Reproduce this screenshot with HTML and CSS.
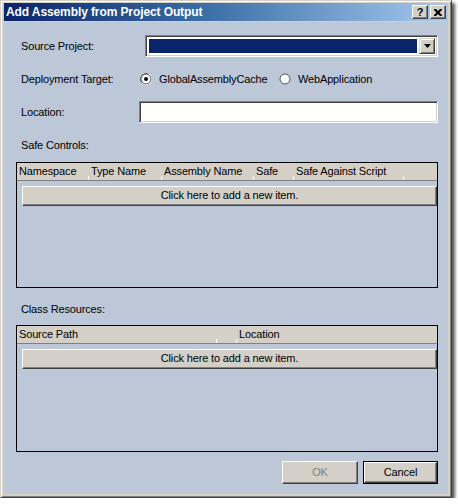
FILE: index.html
```html
<!DOCTYPE html>
<html>
<head>
<meta charset="utf-8">
<link rel="stylesheet" href="styles.css">
</head>
<body>
<div class="window">
  <div class="titlebar">
    <span class="title">Add Assembly from Project Output</span>
    <div class="tbtns">
      <span class="tbtn help">?</span>
      <span class="tbtn close"><svg width="8" height="7" viewBox="0 0 8 7"><path d="M0 0h2l2 2 2-2h2v1L5.5 3.5 8 6v1H6L4 5 2 7H0V6l2.5-2.5L0 1z" fill="#000"/></svg></span>
    </div>
  </div>
  <div class="client">
    <div class="row row1">
      <span class="label">Source Project:</span>
      <div class="combo">
        <div class="sel"></div>
        <div class="drop"><svg width="7" height="4" viewBox="0 0 7 4"><path d="M0 0h7L3.5 4z" fill="#000"/></svg></div>
      </div>
    </div>
    <div class="row row2">
      <span class="label">Deployment Target:</span>
      <div class="opts">
        <label class="opt first">
          <svg class="radio" width="12" height="12" viewBox="0 0 12 12">
            <path d="M4 0.5h4M2 1.5h2M8 1.5h2M1.5 2v2M0.5 4v4M1.5 8v2" stroke="#808080" fill="none"/>
            <path d="M8 1.5h2M10.5 2v2M11.5 4v4M10.5 8v2M8 10.5h2M2 10.5h2M4 11.5h4" stroke="#fff" fill="none"/>
            <circle cx="6" cy="6" r="4.5" fill="#fff"/>
            <circle cx="6" cy="6" r="5" fill="none" stroke="#404040" stroke-width="0.8" stroke-dasharray="0"/>
            <circle cx="6" cy="6" r="2" fill="#000"/>
          </svg>
          <span>GlobalAssemblyCache</span>
        </label>
        <label class="opt">
          <svg class="radio" width="12" height="12" viewBox="0 0 12 12">
            <circle cx="6" cy="6" r="4.5" fill="#fff"/>
            <circle cx="6" cy="6" r="5" fill="none" stroke="#404040" stroke-width="0.8"/>
          </svg>
          <span>WebApplication</span>
        </label>
      </div>
    </div>
    <div class="row row3">
      <span class="label">Location:</span>
      <div class="textbox"></div>
    </div>
    <div class="section-label sl1">Safe Controls:</div>
    <div class="grid">
      <div class="ghead">
        <span class="hcell" style="width:72px">Namespace</span>
        <span class="hcell" style="width:73px">Type Name</span>
        <span class="hcell" style="width:92px">Assembly Name</span>
        <span class="hcell" style="width:40px">Safe</span>
        <span class="hcell" style="width:110px">Safe Against Script</span>
      </div>
      <div class="addrow"><div class="addbtn">Click here to add a new item.</div></div>
    </div>
    <div class="section-label sl2">Class Resources:</div>
    <div class="grid">
      <div class="ghead">
        <span class="hcell" style="width:200px">Source Path</span>
        <span class="hcell" style="width:20px"></span>
        <span class="hcell nosep" style="width:120px">Location</span>
      </div>
      <div class="addrow"><div class="addbtn">Click here to add a new item.</div></div>
    </div>
    <div class="footer">
      <div class="btn disabled">OK</div>
      <div class="btn default"><div class="btn-inner">Cancel</div></div>
    </div>
  </div>
</div>
</body>
</html>
```

FILE: styles.css
```css
html, body {
  margin: 0;
  padding: 0;
  background: #ffffff;
}
body {
  font-family: "Liberation Sans", Arial, sans-serif;
  font-size: 11px;
  letter-spacing: -0.15px;
  color: #000;
}
.window {
  box-sizing: border-box;
  width: 452px;
  height: 498px;
  background: #d4d0c8;
  border: 1px solid;
  border-color: #d4d0c8 #404040 #404040 #d4d0c8;
  box-shadow: inset 1px 1px #ffffff, inset -1px -1px #808080, 3px 3px 3px rgba(0,0,0,0.65);
  padding: 2px 3px 3px 3px;
  display: flex;
  flex-direction: column;
}
.titlebar {
  height: 18px;
  flex: none;
  background: linear-gradient(to right, #0a246a 0%, #3a6ea5 45%, #a6caf0 100%);
  display: flex;
  align-items: center;
  justify-content: space-between;
  padding-left: 2px;
  padding-right: 2px;
  margin-bottom: 1px;
}
.title {
  color: #fff;
  font-weight: bold;
  font-size: 12px;
  letter-spacing: -0.1px;
  line-height: 18px;
}
.tbtns {
  display: flex;
  gap: 2px;
}
.tbtn {
  box-sizing: border-box;
  width: 16px;
  height: 14px;
  background: #d4d0c8;
  border: 1px solid;
  border-color: #ffffff #404040 #404040 #ffffff;
  box-shadow: inset -1px -1px #808080;
  display: flex;
  align-items: center;
  justify-content: center;
  font-weight: bold;
  font-size: 11px;
  line-height: 12px;
  letter-spacing: 0;
}
.tbtn.help { padding-bottom: 1px; }
.client {
  flex: 1;
  background: #bcc7d8;
  padding: 0 10px 0 12px;
  display: flex;
  flex-direction: column;
}
.row {
  display: flex;
  align-items: center;
}
.label {
  box-sizing: border-box;
  width: 123px;
  padding-left: 5px;
  flex: none;
}
.row1 { margin-top: 13px; height: 22px; }
.row2 { margin-top: 14px; height: 16px; }
.row3 { margin-top: 14px; height: 22px; }
.combo {
  box-sizing: border-box;
  margin-left: 6px;
  flex: 1;
  height: 22px;
  border: 1px solid;
  border-color: #808080 #ffffff #ffffff #808080;
  box-shadow: inset 1px 1px #404040, inset -1px -1px #d4d0c8;
  background: #fff;
  padding: 2px 2px 2px 3px;
  display: flex;
  gap: 2px;
}
.sel {
  flex: 1;
  background: #0a246a;
  margin: 1px 0;
}
.drop {
  box-sizing: border-box;
  width: 16px;
  background: #d4d0c8;
  border: 1px solid;
  border-color: #d4d0c8 #404040 #404040 #d4d0c8;
  box-shadow: inset 1px 1px #fff, inset -1px -1px #808080;
  display: flex;
  align-items: center;
  justify-content: center;
}
.opts {
  display: flex;
  align-items: center;
  margin-left: 1px;
}
.opt {
  display: flex;
  align-items: center;
  gap: 7px;
}
.opt.first { width: 139px; }
.radio { display: block; }
.textbox {
  box-sizing: border-box;
  flex: 1;
  height: 22px;
  background: #fff;
  border: 1px solid;
  border-color: #808080 #ffffff #ffffff #808080;
  box-shadow: inset 1px 1px #404040, inset -1px -1px #d4d0c8;
}
.section-label {
  padding-left: 5px;
  line-height: 14px;
}
.sl1 { margin-top: 15px; }
.sl2 { margin-top: 14px; }
.grid {
  box-sizing: border-box;
  border: 1px solid #000;
  margin-top: 10px;
  height: 126px;
}
.sl2 + .grid { margin-top: 9px; height: 127px; }
.ghead {
  height: 18px;
  background: #d4d0c8;
  border-bottom: 1px solid #808080;
  box-sizing: border-box;
  display: flex;
}
.hcell {
  position: relative;
  box-sizing: border-box;
  padding-left: 2px;
  line-height: 17px;
  white-space: nowrap;
  flex: none;
}
.hcell::after {
  content: "";
  position: absolute;
  right: 0;
  bottom: 0;
  width: 1px;
  height: 4px;
  background: #ffffff;
}
.hcell.nosep::after { display: none; }
.addrow {
  padding: 5px 0 0 5px;
}
.addbtn {
  box-sizing: border-box;
  height: 20px;
  background: #d4d0c8;
  border: 1px solid;
  border-color: #ffffff #404040 #404040 #ffffff;
  box-shadow: inset -1px -1px #808080;
  text-align: center;
  line-height: 17px;
}
.footer {
  margin-top: 9px;
  display: flex;
  justify-content: flex-end;
  gap: 5px;
}
.btn {
  box-sizing: border-box;
  height: 23px;
  background: #d4d0c8;
  text-align: center;
}
.btn.disabled {
  width: 76px;
  border: 1px solid;
  border-color: #ffffff #404040 #404040 #ffffff;
  box-shadow: inset -1px -1px #808080;
  color: #808080;
  line-height: 20px;
}
.btn.default {
  width: 75px;
  border: 1px solid #000;
}
.btn-inner {
  box-sizing: border-box;
  height: 21px;
  border: 1px solid;
  border-color: #ffffff #404040 #404040 #ffffff;
  box-shadow: inset -1px -1px #808080;
  line-height: 18px;
}
```
